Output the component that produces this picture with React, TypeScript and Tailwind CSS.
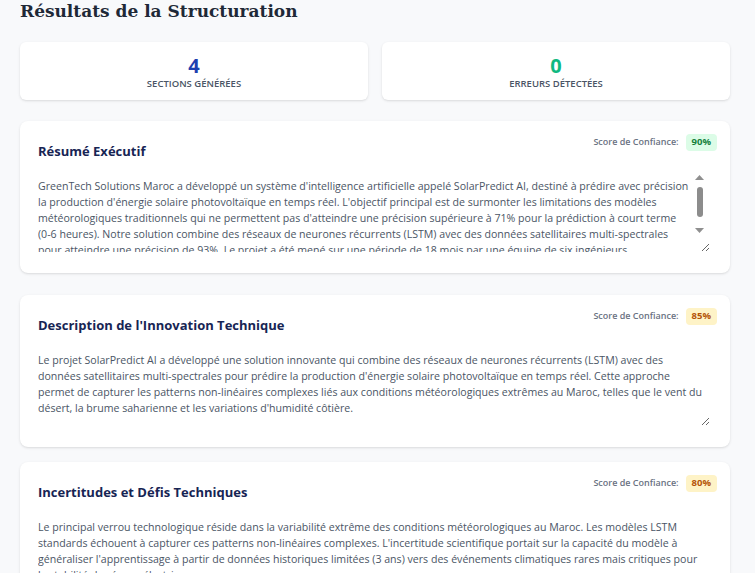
import React from "react";

type SectionProps = {
  titre: string;
  lignes: string[];
  score: number;
  marge: string;
  defile?: boolean;
};

const sections: SectionProps[] = [
  {
    titre: "Résumé Exécutif",
    score: 90,
    marge: "mt-[21px]",
    defile: true,
    lignes: [
      "GreenTech Solutions Maroc a développé un système d'intelligence artificielle appelé SolarPredict AI, destiné à prédire avec précision",
      "la production d'énergie solaire photovoltaïque en temps réel. L'objectif principal est de surmonter les limitations des modèles",
      "météorologiques traditionnels qui ne permettent pas d'atteindre une précision supérieure à 71% pour la prédiction à court terme",
      "(0-6 heures). Notre solution combine des réseaux de neurones récurrents (LSTM) avec des données satellitaires multi-spectrales",
      "pour atteindre une précision de 93%. Le projet a été mené sur une période de 18 mois par une équipe de six ingénieurs.",
      "Les premiers résultats ont été validés sur trois centrales pilotes situées à Ouarzazate, Laâyoune et Benguerir.",
    ],
  },
  {
    titre: "Description de l'Innovation Technique",
    score: 85,
    marge: "mt-[22px]",
    lignes: [
      "Le projet SolarPredict AI a développé une solution innovante qui combine des réseaux de neurones récurrents (LSTM) avec des",
      "données satellitaires multi-spectrales pour prédire la production d'énergie solaire photovoltaïque en temps réel. Cette approche",
      "permet de capturer les patterns non-linéaires complexes liés aux conditions météorologiques extrêmes au Maroc, telles que le vent du",
      "désert, la brume saharienne et les variations d'humidité côtière.",
    ],
  },
  {
    titre: "Incertitudes et Défis Techniques",
    score: 80,
    marge: "mt-[15px]",
    lignes: [
      "Le principal verrou technologique réside dans la variabilité extrême des conditions météorologiques au Maroc. Les modèles LSTM",
      "standards échouent à capturer ces patterns non-linéaires complexes. L'incertitude scientifique portait sur la capacité du modèle à",
      "généraliser l'apprentissage à partir de données historiques limitées (3 ans) vers des événements climatiques rares mais critiques pour",
      "la stabilité du réseau électrique.",
    ],
  },
];

// barre de défilement dessinée (le navigateur headless ne l'affiche pas)
const BarreDefilement = () => (
  <div className="absolute top-[3px] right-[6px] w-[9px] h-[58px] flex flex-col items-center">
    <svg width="9" height="5" viewBox="0 0 9 5">
      <polygon points="4.5,0 9,5 0,5" fill="#8f8f8f" />
    </svg>
    <div className="mt-[7px] w-[6px] h-[30px] rounded-full bg-[#8c8c8c]" />
    <svg className="mt-[11px]" width="9" height="5" viewBox="0 0 9 5">
      <polygon points="0,0 9,0 4.5,5" fill="#8f8f8f" />
    </svg>
  </div>
);

const CarteSection = ({ titre, lignes, score, marge, defile }: SectionProps) => {
  const badge =
    score >= 90
      ? "bg-[#dcfce7] text-[#15803d]"
      : "bg-[#fef3c7] text-[#b45309]";
  return (
    <div className={`${marge} bg-white rounded-lg shadow-sm pt-3 pl-[18px] pr-[13px] pb-[21px]`}>
      <div className="flex justify-between items-start">
        <h3 className="mt-[8px] text-[13px] leading-[20px] font-bold text-[#172554]">{titre}</h3>
        <div className="flex items-center gap-[7px] h-[18px]">
          <span className="text-[9px] font-semibold text-gray-500">Score de Confiance:</span>
          <span className={`${badge} h-[17px] px-[6px] rounded flex items-center text-[9.5px] font-bold`}>
            {score}%
          </span>
        </div>
      </div>
      <div className="relative mt-[11px] w-[672px]">
        <textarea
          readOnly
          wrap="off"
          defaultValue={lignes.join("\n")}
          className="block w-[672px] h-[80px] py-[6px] px-0 border-0 outline-none overflow-hidden text-[10.6px] leading-[16px] text-gray-600 bg-transparent"
        />
        {defile && <BarreDefilement />}
      </div>
    </div>
  );
};

const CarteStat = ({ valeur, libelle, couleur }: { valeur: string; libelle: string; couleur: string }) => (
  <div className="bg-white rounded-md shadow-sm h-[58px] pt-[13px] flex flex-col items-center">
    <div className={`text-[20px] leading-[22px] font-bold ${couleur}`}>{valeur}</div>
    <div className="mt-[1px] text-[9.5px] leading-[12px] font-semibold uppercase text-gray-600">{libelle}</div>
  </div>
);

export default function App() {
  return (
    <div className="bg-[#f8f9fb] font-['Open_Sans',sans-serif] overflow-hidden h-[573px]">
      <div className="ml-5 w-[710px]">
        <h1 className="font-['DejaVu_Serif',serif] text-[17px] leading-[22px] font-bold text-[#1f2937]">
          Résultats de la Structuration
        </h1>
        <div className="mt-[20px] grid grid-cols-2 gap-[14px]">
          <CarteStat valeur="4" libelle="Sections Générées" couleur="text-[#1e40af]" />
          <CarteStat valeur="0" libelle="Erreurs Détectées" couleur="text-[#10b981]" />
        </div>
        {sections.map((s) => (
          <CarteSection key={s.titre} {...s} />
        ))}
      </div>
    </div>
  );
}
